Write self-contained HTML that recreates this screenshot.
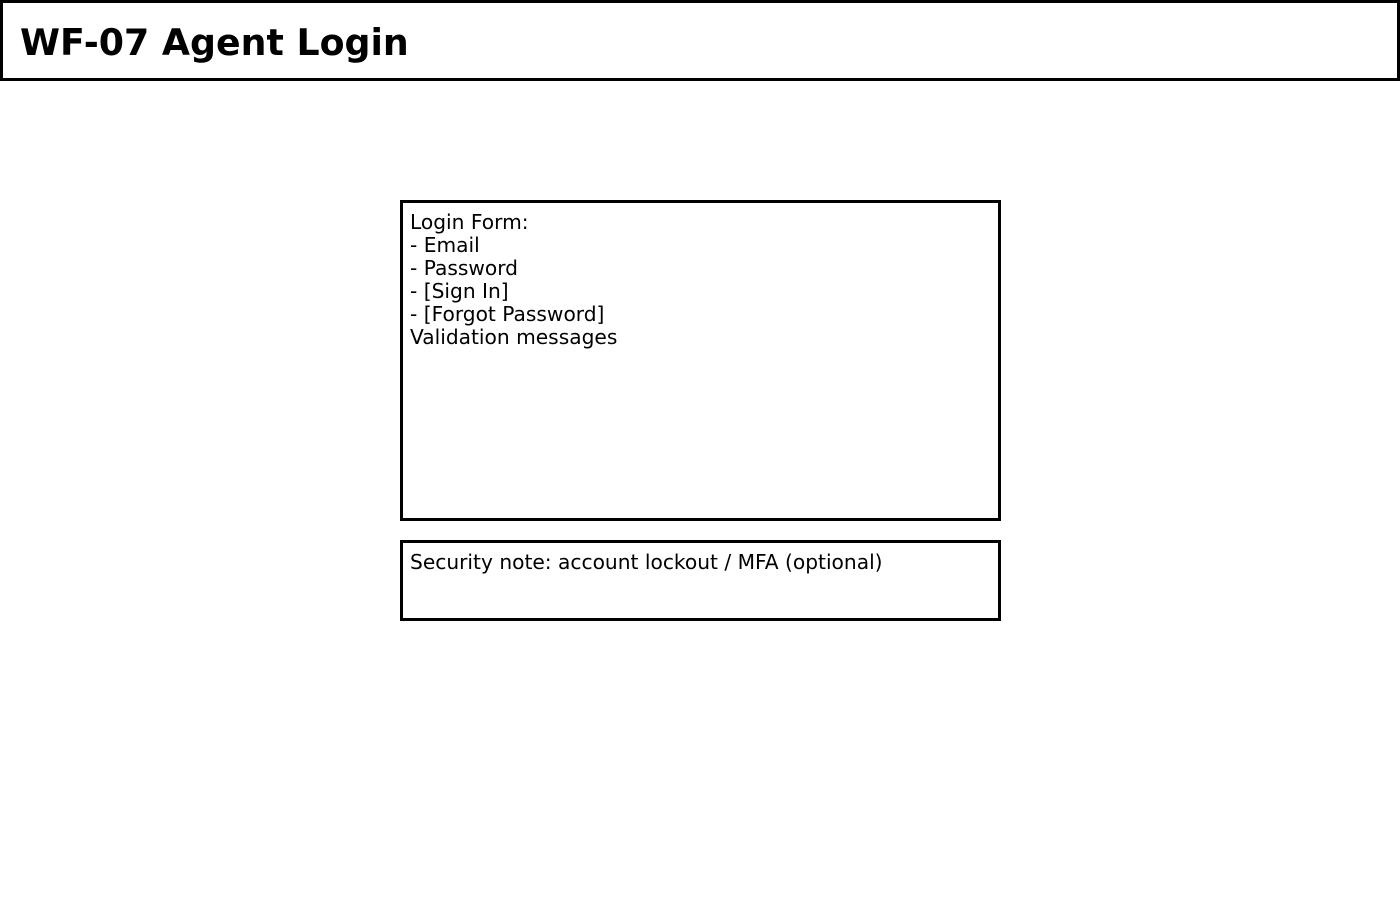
<!DOCTYPE html>
<html><head><style>
body{margin:0;width:1400px;height:900px;background:#fff;font-family:"DejaVu Sans","Liberation Sans",sans-serif;color:#000;position:relative;overflow:hidden}
.b{position:absolute;border:3px solid #000;box-sizing:border-box}
h1{position:absolute;left:20px;top:23px;margin:0;font-size:36.3px;font-weight:bold;line-height:40px}
.t{position:absolute;left:10px;font-size:20.2px;line-height:23px;white-space:pre}
</style></head><body>
<div class="b" style="left:0;top:0;width:1400px;height:81px"></div>
<h1>WF-07 Agent Login</h1>
<div class="b" style="left:400px;top:200px;width:601px;height:321px"><div class="t" style="top:8px;left:7px">Login Form:
- Email
- Password
- [Sign In]
- [Forgot Password]
Validation messages</div></div>
<div class="b" style="left:400px;top:540px;width:601px;height:81px"><div class="t" style="top:8px;left:7px">Security note: account lockout / MFA (optional)</div></div>
</body></html>
